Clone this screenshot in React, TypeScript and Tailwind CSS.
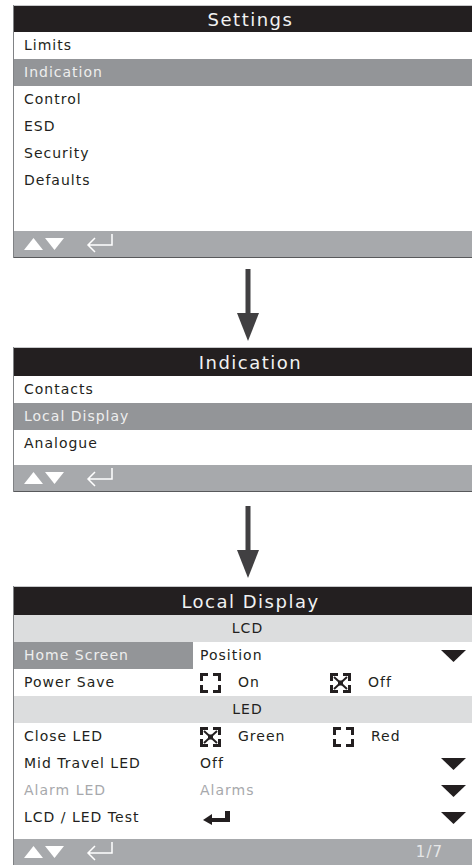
import type { ReactNode } from "react";

const ink = "#231f20";

function DownArrow() {
  return (
    <svg width="22" height="72" viewBox="0 0 22 72" className="block">
      <rect x="8.5" y="0" width="5" height="46" fill="#414042" />
      <polygon points="0,44 22,44 11,72" fill="#414042" />
    </svg>
  );
}

function FooterIcons() {
  return (
    <svg width="104" height="27" viewBox="0 0 104 27" className="block">
      <polygon points="10,19 29,19 19.5,7" fill="#ffffff" />
      <polygon points="31,7 50,7 40.5,19" fill="#ffffff" />
      <path
        d="M98 3 V14 H74 M81 7 L74 14 L81 21"
        stroke="#ffffff"
        strokeWidth="1.5"
        fill="none"
      />
    </svg>
  );
}

function CheckBox({ checked }: { checked?: boolean }) {
  return (
    <svg width="21" height="20" viewBox="0 0 21 20" className="block shrink-0">
      <path
        d="M1.5 8 V1.5 H8 M13 1.5 H19.5 V8 M19.5 12 V18.5 H13 M8 18.5 H1.5 V12"
        stroke={ink}
        strokeWidth="3"
        fill="none"
      />
      {checked && (
        <>
          <path d="M4 4 L17 16 M17 4 L4 16" stroke={ink} strokeWidth="2" />
          <rect x="8" y="7.5" width="5" height="5" fill={ink} />
        </>
      )}
    </svg>
  );
}

function Caret() {
  return (
    <svg width="25" height="12" viewBox="0 0 25 12" className="block">
      <polygon points="0,0 25,0 12.5,12" fill={ink} />
    </svg>
  );
}

function EnterBold() {
  return (
    <svg width="27" height="14" viewBox="0 0 27 14" className="block">
      <rect x="22" y="0" width="5" height="11" fill={ink} />
      <rect x="7" y="7" width="20" height="4" fill={ink} />
      <polygon points="0,9 9,3 9,14" fill={ink} />
    </svg>
  );
}

function Header({ title, h }: { title: string; h: string }) {
  return (
    <div className={`border-t border-[#c7c8ca] bg-[#231f20] ${h} flex items-center justify-center`}>
      <span className="text-[18px] tracking-[1.5px] text-[#f1f2f2]">{title}</span>
    </div>
  );
}

function MenuRow({ label, active }: { label: string; active?: boolean }) {
  return (
    <div
      className={`flex h-[27px] items-center pl-[10px] ${
        active ? "bg-[#939598] text-[#eeeeee]" : "text-[#231f20]"
      }`}
    >
      {label}
    </div>
  );
}

function Footer({ children }: { children?: ReactNode }) {
  return (
    <div className="flex h-[27px] items-center justify-between border-b border-[#58595b] bg-[#a7a9ac]">
      <FooterIcons />
      {children}
    </div>
  );
}

function Panel({ children }: { children: ReactNode }) {
  return (
    <div className="ml-[13px] w-[474px] border-l border-[#808285]">{children}</div>
  );
}

function SubHeader({ label }: { label: string }) {
  return (
    <div className="flex h-[27px] items-center justify-center bg-[#dcddde] pr-[6px] text-[#231f20]">
      {label}
    </div>
  );
}

function SettingRow({
  label,
  active,
  muted,
  children,
}: {
  label: string;
  active?: boolean;
  muted?: boolean;
  children: ReactNode;
}) {
  return (
    <div className="flex h-[27px] items-center">
      <div
        className={`flex h-full w-[179px] items-center pl-[10px] ${
          active ? "bg-[#939598] text-[#eeeeee]" : muted ? "text-[#a7a9ac]" : "text-[#231f20]"
        }`}
      >
        {label}
      </div>
      <div
        className={`flex h-full flex-1 items-center pl-[7px] pr-[21px] ${
          muted ? "text-[#a7a9ac]" : "text-[#231f20]"
        }`}
      >
        {children}
      </div>
    </div>
  );
}

function Choice({ checked, label, w }: { checked?: boolean; label: string; w?: string }) {
  return (
    <div className={`flex items-center gap-[17px] ${w ?? ""}`}>
      <CheckBox checked={checked} />
      <span>{label}</span>
    </div>
  );
}

export default function App() {
  return (
    <div
      className="h-[865px] w-[472px] overflow-hidden bg-white text-[14px] tracking-[1px]"
      style={{ fontFamily: '"DejaVu Sans", sans-serif' }}
    >
      <div className="pt-[5px]">
        <Panel>
          <Header title="Settings" h="h-[27px]" />
          <MenuRow label="Limits" />
          <MenuRow label="Indication" active />
          <MenuRow label="Control" />
          <MenuRow label="ESD" />
          <MenuRow label="Security" />
          <MenuRow label="Defaults" />
          <div className="h-[37px]" />
          <Footer />
        </Panel>
      </div>

      <div className="pl-[237px] pt-[11px] pb-[6px]">
        <DownArrow />
      </div>

      <Panel>
        <Header title="Indication" h="h-[29px]" />
        <MenuRow label="Contacts" />
        <MenuRow label="Local Display" active />
        <MenuRow label="Analogue" />
        <div className="h-[8px]" />
        <Footer />
      </Panel>

      <div className="pl-[237px] pt-[14px] pb-[8px]">
        <DownArrow />
      </div>

      <Panel>
        <Header title="Local Display" h="h-[29px]" />
        <SubHeader label="LCD" />
        <SettingRow label="Home Screen" active>
          <span className="flex-1">Position</span>
          <Caret />
        </SettingRow>
        <SettingRow label="Power Save">
          <Choice checked={false} label="On" w="w-[130px]" />
          <Choice checked label="Off" />
        </SettingRow>
        <SubHeader label="LED" />
        <SettingRow label="Close LED">
          <Choice checked label="Green" w="w-[133px]" />
          <Choice label="Red" />
        </SettingRow>
        <SettingRow label="Mid Travel LED">
          <span className="flex-1">Off</span>
          <Caret />
        </SettingRow>
        <SettingRow label="Alarm LED" muted>
          <span className="flex-1">Alarms</span>
          <Caret />
        </SettingRow>
        <SettingRow label="LCD / LED Test">
          <span className="flex-1 pl-[3px]">
            <EnterBold />
          </span>
          <Caret />
        </SettingRow>
        <div className="h-[8px]" />
        <Footer>
          <span className="pr-[44px] text-[15px] text-[#e6e7e8]">1/7</span>
        </Footer>
      </Panel>
    </div>
  );
}
